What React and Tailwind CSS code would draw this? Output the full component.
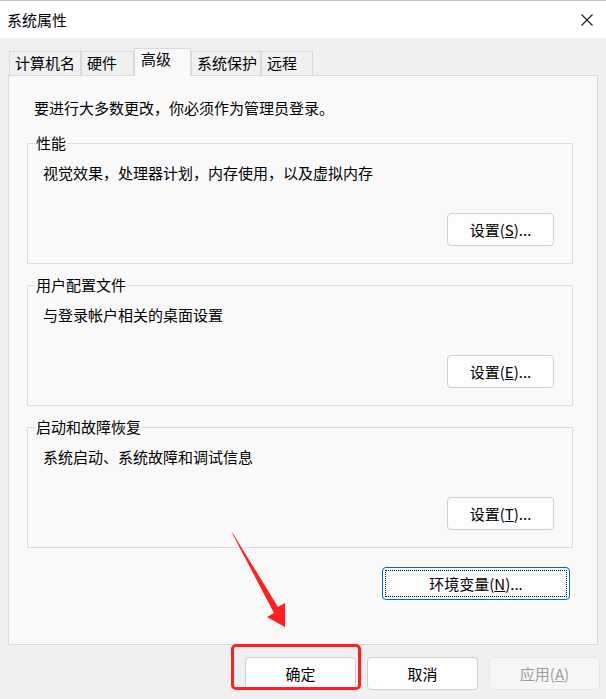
import React from 'react';

const tabs = [
    { label: '计算机名', w: 'w-[72px]' },
    { label: '硬件', w: 'w-[53px]' },
    { label: '高级', w: 'w-[57px]', active: true },
    { label: '系统保护', w: 'w-[70px]' },
    { label: '远程', w: 'w-[52px]' },
];

const groups = [
    { title: '性能', desc: '视觉效果，处理器计划，内存使用，以及虚拟内存', key: 'S' },
    { title: '用户配置文件', desc: '与登录帐户相关的桌面设置', key: 'E' },
    { title: '启动和故障恢复', desc: '系统启动、系统故障和调试信息', key: 'T' },
];

function Tab({ label, w, active }) {
    if (active) {
        return (
            <div className={`${w} h-[28px] -mb-px z-10 bg-[#f9f9f9] border border-b-0 border-[#dadada] flex items-start pl-[6px] text-[15px] leading-[20px]`}>
                {label}
            </div>
        );
    }
    return (
        <div className={`${w} h-[24px] bg-[#f0f0f0] border border-[#dadada] border-b-0 flex items-start pt-px pl-[5px] text-[15px] leading-[20px]`}>
            {label}
        </div>
    );
}

function Group({ title, desc, hotkey }) {
    return (
        <div className="h-[121px] border border-[#dcdcdc] flex flex-col">
            <span className="self-start -mt-[11px] ml-[7px] px-[1px] bg-[#f9f9f9] leading-[20px]">{title}</span>
            <div className="mt-[10px] pl-[15px] leading-[20px]">{desc}</div>
            <div className="mt-[30px] flex justify-end pr-[18px]">
                <button className="w-[107px] h-[33px] rounded-[4px] border border-[#d0d0d0] bg-[#fdfdfd] text-[15px] leading-[20px]">
                    设置(<u>{hotkey}</u>)...
                </button>
            </div>
        </div>
    );
}

export default function App() {
    return (
        <div className="relative w-[606px] h-[699px] overflow-hidden bg-[#f0f0f0] text-black text-[15px] font-['Noto_Sans_CJK_SC','Noto_Sans',sans-serif]">
            {/* title bar */}
            <div className="h-[38px] bg-white border-t border-[#c4c4c4] flex items-center justify-between pl-[7px] pr-[13px]">
                <span className="leading-[20px]">系统属性</span>
                <svg width="12" height="12" viewBox="0 0 12 12" className="mt-[1px]">
                    <path d="M0.5 0.5 L11.5 11.5 M11.5 0.5 L0.5 11.5" stroke="#1a1a1a" strokeWidth="1.1" fill="none" />
                </svg>
            </div>

            {/* tabs */}
            <div className="mt-[10px] pl-[9px] flex items-end h-[27px]">
                {tabs.map((t) => (
                    <Tab key={t.label} {...t} />
                ))}
            </div>

            {/* panel */}
            <div className="mx-[8px] h-[570px] border border-[#dadada] bg-[#f9f9f9] flex flex-col">
                <div className="mt-[22px] pl-[25px] leading-[20px]">要进行大多数更改，你必须作为管理员登录。</div>
                <div className="mt-[25px] ml-[18px] mr-[24px] flex flex-col gap-[21px]">
                    {groups.map((g) => (
                        <Group key={g.title} title={g.title} desc={g.desc} hotkey={g.key} />
                    ))}
                </div>
                <div className="mt-[19px] flex justify-end pr-[27px]">
                    <button className="w-[188px] h-[33px] rounded-[4px] border border-[#0067c0] bg-[#fdfdfd] p-[2px]">
                        <span className="flex w-full h-full items-center justify-center border border-dotted border-black leading-[20px]">
                            环境变量(<u>N</u>)...
                        </span>
                    </button>
                </div>
            </div>

            {/* bottom buttons */}
            <div className="mt-[12px] flex justify-end gap-[11px] pr-[6px]">
                <button className="w-[111px] h-[33px] rounded-[4px] border border-[#d0d0d0] bg-[#fdfdfd] leading-[20px]">确定</button>
                <button className="w-[111px] h-[33px] rounded-[4px] border border-[#d0d0d0] bg-[#fdfdfd] leading-[20px]">取消</button>
                <button className="w-[111px] h-[33px] rounded-[4px] border border-[#e8e8e8] bg-[#f6f6f6] text-[#9d9d9d] leading-[20px]">
                    应用(<u>A</u>)
                </button>
            </div>

            {/* annotation overlay */}
            <div className="absolute left-[231px] top-[644px] w-[130px] h-[46px] border-[3px] border-[#ff2020] rounded-[5px]" />
            <svg className="absolute left-0 top-0" width="606" height="699" viewBox="0 0 606 699">
                <polygon points="232,532 278,607 285,603 285,627 267,617 274,613 233,535" fill="#ff1f1f" />
            </svg>
        </div>
    );
}
